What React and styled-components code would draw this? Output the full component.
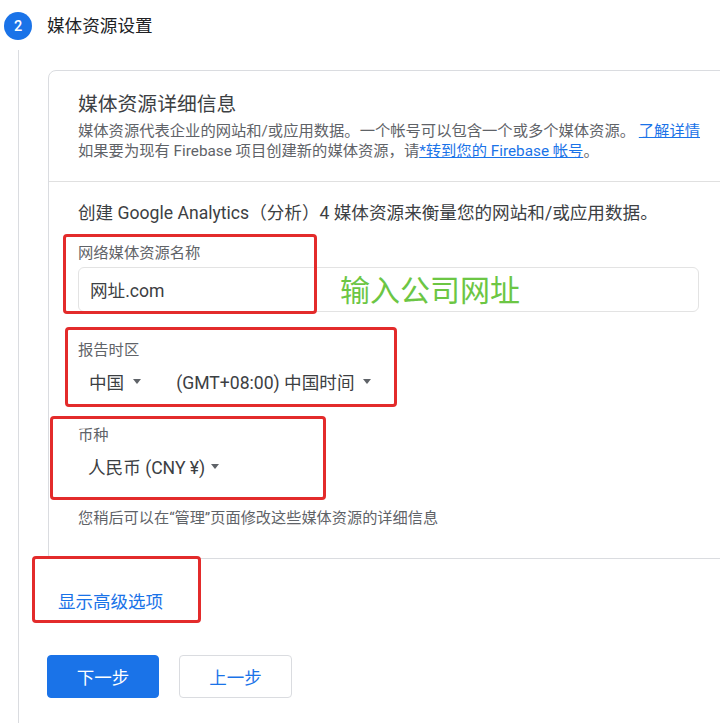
import React from "react";
import styled, { createGlobalStyle } from "styled-components";

const GlobalStyle = createGlobalStyle`
  html, body {
    margin: 0;
    padding: 0;
    background: #ffffff;
    overflow: hidden;
  }
  body {
    font-family: Roboto, "Noto Sans CJK SC", "Noto Sans", sans-serif;
    color: #3c4043;
  }
  * { box-sizing: border-box; }
`;

const Page = styled.div`
  padding-top: 12px;
  width: 720px;
  height: 723px;
  overflow: hidden;
`;

const StepHeader = styled.div`
  display: flex;
  align-items: center;
  gap: 15px;
  padding-left: 4px;
  height: 28px;
`;

const StepBadge = styled.div`
  width: 28px;
  height: 28px;
  border-radius: 50%;
  background: #1a73e8;
  color: #ffffff;
  font-size: 14.5px;
  font-weight: 500;
  display: flex;
  align-items: center;
  justify-content: center;
`;

const StepTitle = styled.div`
  font-size: 17.6px;
  line-height: 26px;
  color: #202124;
`;

const StepBody = styled.div`
  margin-top: 10px;
  margin-left: 18px;
  padding: 20px 0 0 29px;
  border-left: 1px solid #dadce0;
  min-height: 700px;
`;

const Card = styled.div`
  width: 700px;
  border: 1px solid #dadce0;
  border-radius: 8px 8px 4px 4px;
  background: #ffffff;
`;

const CardSection = styled.div`
  padding: ${(p) => p.$pad};
  border-top: ${(p) => (p.$divided ? "1px solid #e0e0e0" : "none")};
`;

const Heading = styled.h2`
  margin: 0;
  font-size: 19.8px;
  line-height: 28px;
  font-weight: 400;
  color: #3c4043;
`;

const SubText = styled.p`
  margin: 2px 0 0;
  font-size: 15.3px;
  line-height: 20px;
  color: #5f6368;
`;

const Link = styled.a`
  color: #1a73e8;
  text-decoration: underline;
  cursor: pointer;
`;

const Intro = styled.p`
  margin: 0;
  font-size: 17.6px;
  line-height: 22px;
  color: #3c4043;
`;

const Field = styled.div`
  position: relative;
  margin-top: ${(p) => p.$mt}px;
`;

const FieldLabel = styled.div`
  font-size: 15.3px;
  line-height: 20px;
  color: #5f6368;
`;

const TextInput = styled.div`
  margin-top: 4px;
  width: 621px;
  height: 45px;
  border: 1px solid #e3e3e3;
  border-radius: 6px;
  padding-left: 11px;
  display: flex;
  align-items: center;
  font-size: 17.6px;
  color: #3c4043;
`;

const SelectRow = styled.div`
  margin-top: 9px;
  display: flex;
  gap: 24px;
`;

const Select = styled.div`
  display: inline-flex;
  align-items: center;
  gap: ${(p) => p.$gap || 9}px;
  padding-left: ${(p) => p.$pl ?? 11}px;
  height: 24px;
  font-size: 17.6px;
  color: #3c4043;
`;

const Caret = styled.span`
  display: inline-block;
  width: 0;
  height: 0;
  border-left: 4.5px solid transparent;
  border-right: 4.5px solid transparent;
  border-top: 5px solid #5f6368;
`;

const HelpText = styled.p`
  margin: 30px 0 0;
  font-size: 15.2px;
  line-height: 20px;
  color: #5f6368;
`;

const Highlight = styled.div`
  position: absolute;
  left: ${(p) => p.$left}px;
  top: ${(p) => p.$top}px;
  width: ${(p) => p.$w}px;
  height: ${(p) => p.$h}px;
  border: 3px solid #e32b2b;
  border-radius: 4px;
  pointer-events: none;
`;

const Note = styled.div`
  position: absolute;
  left: 262px;
  top: 30px;
  font-size: 30px;
  line-height: 36px;
  color: #6cc644;
  white-space: nowrap;
`;

const Advanced = styled.div`
  position: relative;
  margin-top: 31px;
  margin-left: 10px;
  width: max-content;
`;

const AdvancedLink = styled.a`
  display: block;
  font-size: 17.5px;
  line-height: 24px;
  color: #1a73e8;
  cursor: pointer;
`;

const ButtonRow = styled.div`
  margin-top: 41px;
  margin-left: -1px;
  display: flex;
  gap: 20px;
`;

const Button = styled.button`
  width: ${(p) => p.$w}px;
  height: 43px;
  border-radius: 4px;
  font-family: inherit;
  font-size: 17.5px;
  cursor: pointer;
  border: 1px solid ${(p) => (p.$primary ? "#1a73e8" : "#dadce0")};
  background: ${(p) => (p.$primary ? "#1a73e8" : "#ffffff")};
  color: ${(p) => (p.$primary ? "#ffffff" : "#1a73e8")};
`;

export default function App() {
  return (
    <>
      <GlobalStyle />
      <Page>
        <StepHeader>
          <StepBadge>2</StepBadge>
          <StepTitle>媒体资源设置</StepTitle>
        </StepHeader>
        <StepBody>
          <Card>
            <CardSection $pad="20px 0 20px 29px">
              <Heading>媒体资源详细信息</Heading>
              <SubText>
                媒体资源代表企业的网站和/或应用数据。一个帐号可以包含一个或多个媒体资源。{" "}
                <Link>了解详情</Link>
                <br />
                如果要为现有 Firebase 项目创建新的媒体资源，请
                <Link>*转到您的 Firebase 帐号</Link>。
              </SubText>
            </CardSection>
            <CardSection $divided $pad="20px 0 30px 29px">
              <Intro>创建 Google Analytics（分析）4 媒体资源来衡量您的网站和/或应用数据。</Intro>

              <Field $mt={19}>
                <FieldLabel>网络媒体资源名称</FieldLabel>
                <TextInput>网址.com</TextInput>
                <Note>输入公司网址</Note>
                <Highlight $left={-15} $top={-9} $w={254} $h={80} />
              </Field>

              <Field $mt={28}>
                <FieldLabel>报告时区</FieldLabel>
                <SelectRow>
                  <Select>
                    <span>中国</span>
                    <Caret />
                  </Select>
                  <Select>
                    <span>(GMT+08:00) 中国时间</span>
                    <Caret />
                  </Select>
                </SelectRow>
                <Highlight $left={-13} $top={-13} $w={332} $h={80} />
              </Field>

              <Field $mt={32}>
                <FieldLabel>币种</FieldLabel>
                <SelectRow>
                  <Select $pl={10} $gap={6}>
                    <span>人民币 (CNY ¥)</span>
                    <Caret />
                  </Select>
                </SelectRow>
                <Highlight $left={-28} $top={-9} $w={276} $h={84} />
              </Field>

              <HelpText>您稍后可以在“管理”页面修改这些媒体资源的详细信息</HelpText>
            </CardSection>
          </Card>

          <Advanced>
            <AdvancedLink>显示高级选项</AdvancedLink>
            <Highlight $left={-26} $top={-34} $w={169} $h={67} />
          </Advanced>

          <ButtonRow>
            <Button $primary $w={112}>下一步</Button>
            <Button $w={113}>上一步</Button>
          </ButtonRow>
        </StepBody>
      </Page>
    </>
  );
}
